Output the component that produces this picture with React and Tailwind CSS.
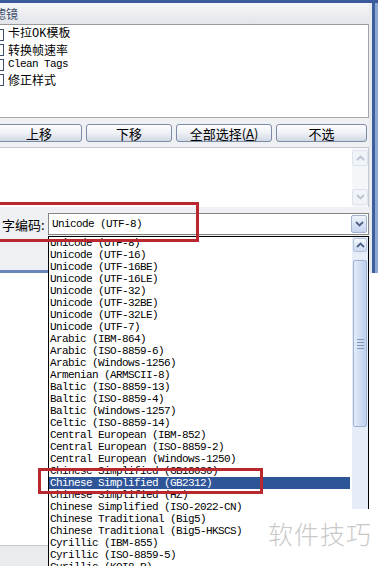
import React from 'react';

const mono = "font-['Liberation_Mono',monospace] text-[11px] tracking-[-0.6px]";
const cjk = "font-['Noto_Sans_CJK_SC',sans-serif]";
const mixed = "font-['Liberation_Mono','Noto_Sans_CJK_SC',monospace] text-[12px]";
const cell = 'inline-block h-[15px] leading-[15px] align-top overflow-hidden';

const encodings = [
    'Unicode (UTF-8)',
    'Unicode (UTF-16)',
    'Unicode (UTF-16BE)',
    'Unicode (UTF-16LE)',
    'Unicode (UTF-32)',
    'Unicode (UTF-32BE)',
    'Unicode (UTF-32LE)',
    'Unicode (UTF-7)',
    'Arabic (IBM-864)',
    'Arabic (ISO-8859-6)',
    'Arabic (Windows-1256)',
    'Armenian (ARMSCII-8)',
    'Baltic (ISO-8859-13)',
    'Baltic (ISO-8859-4)',
    'Baltic (Windows-1257)',
    'Celtic (ISO-8859-14)',
    'Central European (IBM-852)',
    'Central European (ISO-8859-2)',
    'Central European (Windows-1250)',
    'Chinese Simplified (GB18030)',
    'Chinese Simplified (GB2312)',
    'Chinese Simplified (HZ)',
    'Chinese Simplified (ISO-2022-CN)',
    'Chinese Traditional (Big5)',
    'Chinese Traditional (Big5-HKSCS)',
    'Cyrillic (IBM-855)',
    'Cyrillic (ISO-8859-5)',
    'Cyrillic (KOI8-R)',
];

const Chevron = ({ up, color = '#4d6185' }) => (
    <svg width="9" height="6" viewBox="0 0 9 6">
        <path
            d={up ? 'M1 5 L4.5 1.5 L8 5' : 'M1 1 L4.5 4.5 L8 1'}
            fill="none"
            stroke={color}
            strokeWidth="1.8"
        />
    </svg>
);

function FilterRow({ children }) {
    return (
        <div className="h-[15px] flex items-center">
            <div className="w-[13px] h-[12px] ml-[-9px] border border-[#3d4f6e] bg-white shrink-0"></div>
            <div className="ml-[4px] h-[15px] whitespace-nowrap text-black flex">{children}</div>
        </div>
    );
}

function Button({ width, children }) {
    return (
        <div
            className={`${width} h-[18px] shrink-0 rounded-[3px] border border-[#7d8ca6] bg-gradient-to-b from-[#fdfdfe] via-[#eef1f6] to-[#d2d8e2] flex items-center justify-center text-[13px] text-black ${cjk} leading-none`}
        >
            {children}
        </div>
    );
}

export default function App() {
    return (
        <div className="relative w-[378px] h-[566px] overflow-hidden bg-white">
            {/* title strip */}
            <div className="h-[3px] bg-[#3a5a9b]"></div>

            {/* dialog body */}
            <div className="flex h-[270px]">
                <div className="w-[369px] flex flex-col bg-[#eef0f4] border-b-[3px] border-[#6a86b8]">
                    {/* group header */}
                    <div className="h-[21px] bg-gradient-to-b from-[#f6f6f8] to-[#e4e5ea] flex items-center">
                        <span className={`ml-[-6px] text-[12px] text-[#3c4c6c] ${cjk} leading-none`}>滤镜</span>
                    </div>
                    <div className="h-px bg-[#9a9a9a]"></div>

                    {/* filter list */}
                    <div className="h-[93px] bg-white border-r border-b border-[#a6a6a6] pt-[2px]">
                        <FilterRow>
                            <span className={`${cell} ${mixed}`}>卡拉OK模板</span>
                        </FilterRow>
                        <FilterRow>
                            <span className={`${cell} text-[12px] ${cjk}`}>转换帧速率</span>
                        </FilterRow>
                        <FilterRow>
                            <span className={`${cell} ${mono}`}>Clean Tags</span>
                        </FilterRow>
                        <FilterRow>
                            <span className={`${cell} text-[12px] ${cjk}`}>修正样式</span>
                        </FilterRow>
                    </div>

                    {/* buttons */}
                    <div className="mt-[6px] ml-[-4px] flex gap-[4px]">
                        <Button width="w-[86px]">上移</Button>
                        <Button width="w-[86px]">下移</Button>
                        <Button width="w-[96px]">
                            全部选择(<span className="underline">A</span>)
                        </Button>
                        <Button width="w-[91px]">不选</Button>
                    </div>

                    {/* text area */}
                    <div className="mt-[5px] h-[60px] bg-white border-t border-r border-[#c5c8ce] flex">
                        <div className="flex-1"></div>
                        <div className="w-[16px] flex flex-col py-[2px] bg-[#f4f6fa]">
                            <div className="h-[16px] rounded-[2px] border border-[#dde3ec] bg-[#f0f3f8] flex items-center justify-center">
                                <Chevron up color="#b9c4d4" />
                            </div>
                            <div className="flex-1"></div>
                            <div className="h-[16px] rounded-[2px] border border-[#dde3ec] bg-[#f0f3f8] flex items-center justify-center">
                                <Chevron color="#b9c4d4" />
                            </div>
                        </div>
                    </div>

                    {/* encoding combo */}
                    <div className="mt-[6px] h-[22px] flex items-center">
                        <div className={`w-[48px] pl-[2px] text-[13px] text-black ${cjk} leading-none`}>字编码:</div>
                        <div className="flex-1 h-[22px] border border-[#858585] bg-white flex items-center">
                            <span className={`flex-1 pl-[3px] text-black ${mono}`}>Unicode (UTF-8)</span>
                            <div className="w-[16px] h-[18px] mr-px rounded-[2px] border border-[#a3b3cf] bg-gradient-to-b from-[#eef3fb] to-[#c6d5ee] flex items-center justify-center">
                                <Chevron />
                            </div>
                        </div>
                    </div>
                    <div className="flex-1"></div>
                </div>

                {/* window frame */}
                <div className="flex-1 flex">
                    <div className="w-[3px] bg-[#e8eaef]"></div>
                    <div className="w-[3px] bg-[#3d5f9e]"></div>
                    <div className="flex-1 bg-[#8ea7d2]"></div>
                </div>
            </div>

            <div className="h-[272px]"></div>
            <div className="w-[48px] h-[21px] bg-[#e9ebef] border-t border-[#c6c9d0]"></div>

            {/* dropdown list */}
            <div className="absolute left-[48px] top-[236px] w-[321px] bottom-0 bg-white border-l border-t border-black flex items-start">
                <div className="w-[303px]">
                    {encodings.map((name) => (
                        <div
                            key={name}
                            className={`h-[12px] leading-[12px] pl-[1px] whitespace-nowrap ${mono} ${name === 'Chinese Simplified (GB2312)' ? 'bg-[#2f5599] text-white mr-[2px]' : 'text-black'}`}
                        >
                            {name}
                        </div>
                    ))}
                </div>
                <div className="w-[17px] h-[272px] border-r border-black flex flex-col bg-[#e6edf8]">
                    <div className="h-[14px] mt-px mx-px rounded-[2px] border border-[#b3c1da] bg-gradient-to-b from-[#f5f8fc] to-[#cad9ef] flex items-center justify-center">
                        <Chevron up />
                    </div>
                    <div className="h-[8px]"></div>
                    <div className="h-[167px] mx-px rounded-[2px] border border-[#9db2d5] bg-gradient-to-r from-[#e3ecf9] to-[#bdd0ec] flex flex-col items-center justify-center gap-[2px]">
                        <div className="w-[7px] h-px bg-[#8297bb]"></div>
                        <div className="w-[7px] h-px bg-[#8297bb]"></div>
                        <div className="w-[7px] h-px bg-[#8297bb]"></div>
                        <div className="w-[7px] h-px bg-[#8297bb]"></div>
                    </div>
                </div>
            </div>

            {/* red annotations */}
            <div className="absolute left-[-10px] top-[202px] w-[209px] h-[40px] border-[3px] border-[#b9282e]"></div>
            <div className="absolute left-[38px] top-[468px] w-[225px] h-[26px] border-[3px] border-[#b9282e]"></div>

            {/* watermark */}
            <div className={`absolute left-[268px] top-[521px] text-[25px] font-light tracking-[1px] text-[#c9c9c9] ${cjk} leading-none`}>
                软件技巧
            </div>
        </div>
    );
}
